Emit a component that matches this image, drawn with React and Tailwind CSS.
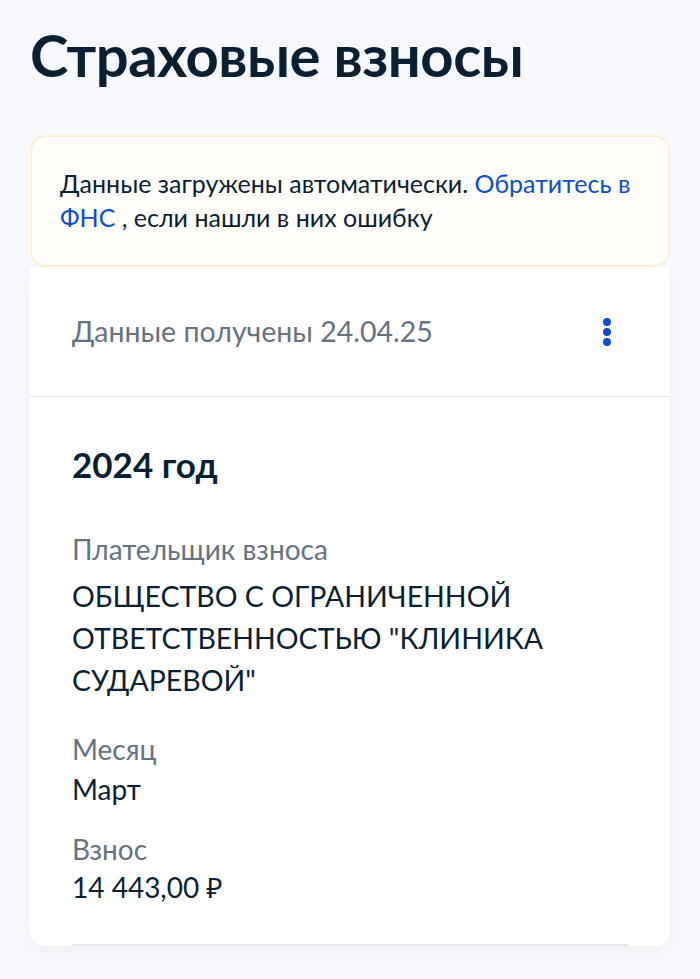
export default function App() {
  return (
    <div className="min-h-[979px] w-[700px] bg-[#f6f8fb] pb-8" style={{ fontFamily: "Lato, 'Noto Sans', sans-serif" }}>
      <h1 className="px-[30px] pt-[22px] text-[58px] font-bold leading-[66px] text-[#0b1f33] tracking-[-0.5px]">
        Страховые взносы
      </h1>
      <div className="mx-[30px] mt-[47px] rounded-[16px] border-2 border-[#fcefd2] bg-[#fffefb] px-[28px] pb-[31px] pt-[29px] text-[25px] leading-[34px] text-[#0b1f33]">
        Данные загружены автоматически. <span className="text-[#0d4cd3]">Обратитесь в</span>{" "}
        <span className="text-[#0d4cd3]">ФНС</span> , если нашли в них ошибку
      </div>
      <div className="mx-[30px] rounded-b-[16px] bg-white shadow-[0_6px_20px_rgba(40,60,100,0.04)]">
        <div className="flex h-[130px] items-center justify-between border-b border-[#e1e4e8] pl-[42px] pr-[59px]">
          <span className="text-[28.5px] text-[#66727f]">Данные получены 24.04.25</span>
          <svg width="8" height="28" viewBox="0 0 8 28">
            <circle cx="4" cy="4" r="4" fill="#0d4cd3" />
            <circle cx="4" cy="14" r="4" fill="#0d4cd3" />
            <circle cx="4" cy="24" r="4" fill="#0d4cd3" />
          </svg>
        </div>
        <div className="px-[42px] pt-[47px]">
          <div className="text-[35px] font-bold leading-[40px] text-[#0b1f33]">2024 год</div>
          <div className="mt-[48px] text-[28px] leading-[34px] text-[#66727f]">Плательщик взноса</div>
          <div className="mt-[9px] text-[28.5px] leading-[42px] text-[#0b1f33]">
            ОБЩЕСТВО С ОГРАНИЧЕННОЙ ОТВЕТСТВЕННОСТЬЮ "КЛИНИКА СУДАРЕВОЙ"
          </div>
          <div className="mt-[28px] text-[28px] leading-[40px] text-[#66727f]">Месяц</div>
          <div className="text-[28px] leading-[40px] text-[#0b1f33]">Март</div>
          <div className="mt-[20px] text-[28px] leading-[40px] text-[#66727f]">Взнос</div>
          <div className="-mt-[2px] text-[28px] leading-[40px] text-[#0b1f33]">14 443,00 ₽</div>
          <div className="mt-[37px] border-b-2 border-[#e5e7eb]" />
        </div>
      </div>
    </div>
  );
}
